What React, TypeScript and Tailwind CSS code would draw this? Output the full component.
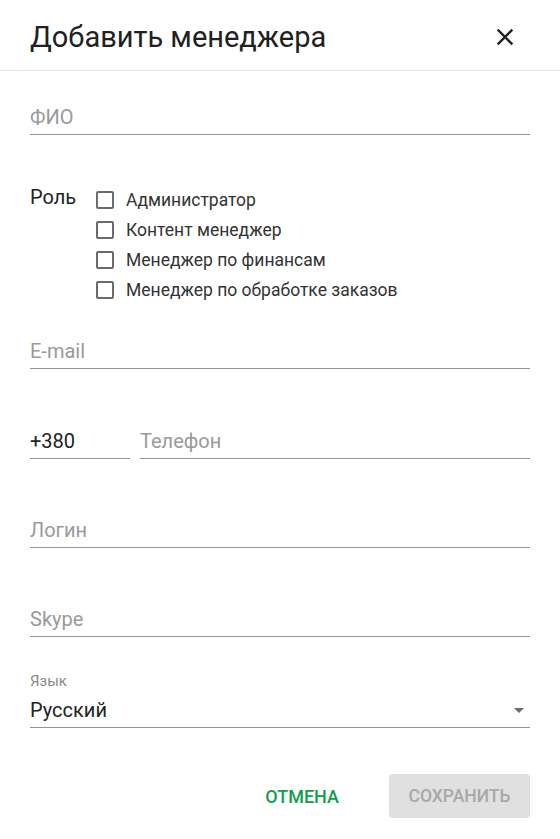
const roles = [
  'Администратор',
  'Контент менеджер',
  'Менеджер по финансам',
  'Менеджер по обработке заказов',
];

function CloseIcon() {
  return (
    <svg width="28" height="28" viewBox="0 0 24 24" fill="#222">
      <path d="M19 6.41 17.59 5 12 10.59 6.41 5 5 6.41 10.59 12 5 17.59 6.41 19 12 13.41 17.59 19 19 17.59 13.41 12z" />
    </svg>
  );
}

function Field({
  placeholder,
  value,
  className = '',
}: {
  placeholder?: string;
  value?: string;
  className?: string;
}) {
  return (
    <div className={`border-b border-[#949494] pb-[5px] ${className}`}>
      <div
        className={`text-[20px] leading-[24px] ${
          value ? 'text-[#222]' : 'text-[#9a9a9a]'
        }`}
      >
        {value ?? placeholder}
      </div>
    </div>
  );
}

export default function App() {
  return (
    <div
      className="min-h-[839px] w-[560px] bg-white"
      style={{ fontFamily: 'Roboto, "Noto Sans", sans-serif' }}
    >
      <div className="flex h-[71px] items-center justify-between border-b border-[#e3e3e3] pl-[30px] pr-[41px] pt-[3px]">
        <h1 className="text-[29px] leading-[32px] text-[#212121]">
          Добавить менеджера
        </h1>
        <CloseIcon />
      </div>

      <div className="px-[30px]">
        <Field placeholder="ФИО" className="mt-[34px]" />

        <div className="mt-[50px] flex">
          <div className="w-[66px] text-[20px] leading-[24px] text-[#222]">
            Роль
          </div>
          <div className="flex flex-col">
            {roles.map((role) => (
              <label
                key={role}
                className="flex h-[30px] items-center gap-[12px]"
              >
                <span className="h-[18px] w-[18px] rounded-[2px] border-2 border-[#6b6b6b]" />
                <span className="pt-[1px] text-[17.5px] text-[#333]">{role}</span>
              </label>
            ))}
          </div>
        </div>

        <Field placeholder="E-mail" className="mt-[34px]" />

        <div className="mt-[60px] flex gap-[10px]">
          <Field value="+380" className="w-[100px]" />
          <Field placeholder="Телефон" className="flex-1" />
        </div>

        <Field placeholder="Логин" className="mt-[59px]" />
        <Field placeholder="Skype" className="mt-[59px]" />

        <div className="mt-[36px]">
          <div className="text-[15px] leading-[16px] text-[#8a8a8a]">Язык</div>
          <div className="mt-[9px] flex items-center justify-between border-b border-[#949494] pb-[5px]">
            <div className="text-[20px] leading-[24px] text-[#222]">Русский</div>
            <svg width="24" height="24" viewBox="0 0 24 24" fill="#6b6b6b" className="mr-[-1px]">
              <path d="M7 10l5 5 5-5z" />
            </svg>
          </div>
        </div>

        <div className="mt-[46px] flex items-center justify-end gap-[34px]">
          <button className="px-[16px] text-[18px] font-medium uppercase text-[#0f9d4f]">
            Отмена
          </button>
          <button
            disabled
            className="h-[44px] w-[141px] rounded-[4px] bg-[#e0e0e0] text-[17.5px] font-medium uppercase text-[#a8a8a8]"
          >
            Сохранить
          </button>
        </div>
      </div>
    </div>
  );
}
